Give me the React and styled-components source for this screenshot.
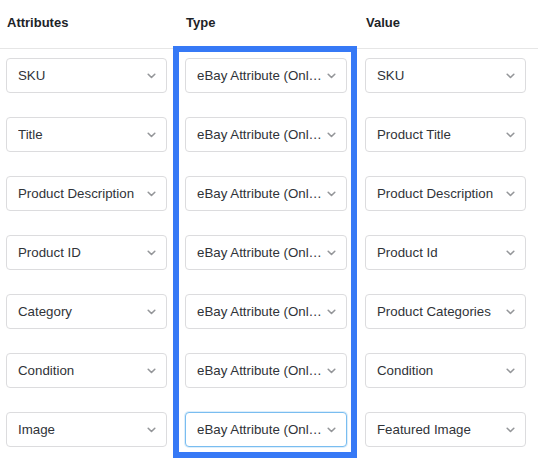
import React from 'react';
import styled, { createGlobalStyle } from 'styled-components';

const GlobalStyle = createGlobalStyle`
  html, body {
    margin: 0;
    padding: 0;
    background: #fff;
  }
  body {
    font-family: "Liberation Sans", Arial, sans-serif;
  }
`

const Table = styled.div`
  width: 538px;
  height: 460px;
  overflow: hidden;
  background: #fff;
`

const HeaderRow = styled.div`
  display: grid;
  grid-template-columns: 161px 162px 161px;
  column-gap: 18px;
  padding-left: 6px;
  height: 48px;
  align-items: center;
  border-bottom: 1px solid #e6e6e6;
`

const HeadCell = styled.div`
  font-size: 13px;
  font-weight: 700;
  color: #1d2327;
  padding-left: 1px;
  margin-top: -4px;
`

const Body = styled.div`
  display: grid;
  grid-template-columns: 161px 162px 161px;
  column-gap: 18px;
  padding: 9px 0 0 6px;
`

const Column = styled.div`
  position: relative;
  display: flex;
  flex-direction: column;
  gap: 24px;

  ${props => props.highlighted && `
    &::after {
      content: '';
      position: absolute;
      top: -12px;
      bottom: -11px;
      left: -12px;
      right: -10px;
      border: 6px solid #3679f6;
      pointer-events: none;
    }
  `}
`

const SelectBox = styled.div`
  box-sizing: border-box;
  height: 35px;
  display: flex;
  align-items: center;
  padding: 0 10px 0 11px;
  background: #fff;
  border: 1px solid ${props => props.focused ? '#79bdf0' : '#dcdcde'};
  border-radius: 4px;
  box-shadow: ${props => props.focused ? '0 0 0 1px rgba(121,189,240,0.25)' : 'none'};
`

const Label = styled.span`
  flex: 1;
  min-width: 0;
  font-size: 13.3px;
  color: #303338;
  white-space: nowrap;
  overflow: hidden;
  text-overflow: ellipsis;
  margin-right: 5px;
`

const Chevron = styled.svg`
  flex: none;
  width: 9px;
  height: 6px;
`

const Select = ({ value, focused }) => (
  <SelectBox focused={focused}>
    <Label>{value}</Label>
    <Chevron viewBox="0 0 9 6" fill="none">
      <path d="M1.2 1.3L4.5 4.5L7.8 1.3" stroke="#949699" strokeWidth="1.6" strokeLinecap="round" strokeLinejoin="round" />
    </Chevron>
  </SelectBox>
)

const rows = [
  ['SKU', 'SKU'],
  ['Title', 'Product Title'],
  ['Product Description', 'Product Description'],
  ['Product ID', 'Product Id'],
  ['Category', 'Product Categories'],
  ['Condition', 'Condition'],
  ['Image', 'Featured Image'],
]

const App = () => {
  return (
    <Table>
      <GlobalStyle />
      <HeaderRow>
        <HeadCell>Attributes</HeadCell>
        <HeadCell>Type</HeadCell>
        <HeadCell>Value</HeadCell>
      </HeaderRow>
      <Body>
        <Column>
          {rows.map(r => <Select key={r[0]} value={r[0]} />)}
        </Column>
        <Column highlighted>
          {rows.map((r, i) => (
            <Select key={r[0]} value="eBay Attribute (Online)" focused={i === rows.length - 1} />
          ))}
        </Column>
        <Column>
          {rows.map(r => <Select key={r[0]} value={r[1]} />)}
        </Column>
      </Body>
    </Table>
  )
}

export default App
